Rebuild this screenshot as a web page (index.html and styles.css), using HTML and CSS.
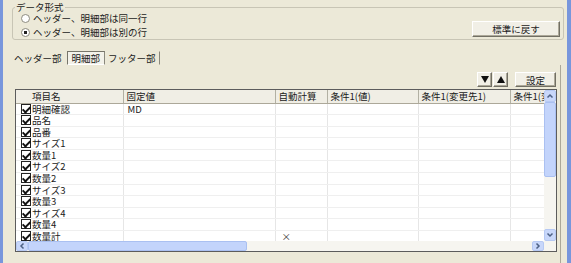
FILE: index.html
```html
<!DOCTYPE html>
<html lang="ja">
<head>
    <meta charset="UTF-8">
    <title>明細部設定</title>
    <link rel="stylesheet" href="styles.css">
</head>
<body>
<div class="window">
    <fieldset class="format">
        <legend>データ形式</legend>
        <div class="format-body">
            <div class="options">
                <label class="option"><span class="radio"></span>ヘッダー、明細部は同一行</label>
                <label class="option"><span class="radio checked"></span>ヘッダー、明細部は別の行</label>
            </div>
            <button class="btn reset">標準に戻す</button>
        </div>
    </fieldset>

    <div class="tabs">
        <span class="tab">ヘッダー部</span>
        <span class="tab active">明細部</span>
        <span class="tab last">フッター部</span>
    </div>

    <div class="panel">
        <div class="toolbar">
            <button class="btn arrow" title="下へ">
                <svg width="8" height="7" viewBox="0 0 8 7"><polygon points="0,0 8,0 4,7" fill="#111"/></svg>
            </button>
            <button class="btn arrow" title="上へ">
                <svg width="8" height="7" viewBox="0 0 8 7"><polygon points="0,7 8,7 4,0" fill="#111"/></svg>
            </button>
            <button class="btn setting">設定</button>
        </div>

        <div class="grid">
            <div class="viewport">
                <table class="list">
                    <colgroup>
                        <col class="c-name"><col class="c-fixed"><col class="c-auto">
                        <col class="c-val"><col class="c-dest"><col class="c-more">
                    </colgroup>
                    <thead>
                        <tr>
                            <th class="name">項目名</th>
                            <th>固定値</th>
                            <th>自動計算</th>
                            <th>条件1(値)</th>
                            <th>条件1(変更先1)</th>
                            <th>条件1(変更先2)</th>
                        </tr>
                    </thead>
                    <tbody>
                        <tr><td class="name"><span class="chk"></span>明細確認</td><td>MD</td><td></td><td></td><td></td><td></td></tr>
                        <tr><td class="name"><span class="chk"></span>品名</td><td></td><td></td><td></td><td></td><td></td></tr>
                        <tr><td class="name"><span class="chk"></span>品番</td><td></td><td></td><td></td><td></td><td></td></tr>
                        <tr><td class="name"><span class="chk"></span>サイズ1</td><td></td><td></td><td></td><td></td><td></td></tr>
                        <tr><td class="name"><span class="chk"></span>数量1</td><td></td><td></td><td></td><td></td><td></td></tr>
                        <tr><td class="name"><span class="chk"></span>サイズ2</td><td></td><td></td><td></td><td></td><td></td></tr>
                        <tr><td class="name"><span class="chk"></span>数量2</td><td></td><td></td><td></td><td></td><td></td></tr>
                        <tr><td class="name"><span class="chk"></span>サイズ3</td><td></td><td></td><td></td><td></td><td></td></tr>
                        <tr><td class="name"><span class="chk"></span>数量3</td><td></td><td></td><td></td><td></td><td></td></tr>
                        <tr><td class="name"><span class="chk"></span>サイズ4</td><td></td><td></td><td></td><td></td><td></td></tr>
                        <tr><td class="name"><span class="chk"></span>数量4</td><td></td><td></td><td></td><td></td><td></td></tr>
                        <tr><td class="name"><span class="chk"></span>数量計</td><td></td><td class="mark">×</td><td></td><td></td><td></td></tr>
                    </tbody>
                </table>
            </div>

            <!-- vertical scrollbar -->
            <div class="vscroll">
                <span class="sb-btn">
                    <svg width="8" height="6" viewBox="0 0 8 6"><path d="M1.5 4.5 L4 2 L6.5 4.5" fill="none" stroke="#4d6185" stroke-width="1.5"/></svg>
                </span>
                <span class="thumb vthumb"></span>
                <span class="track"></span>
                <span class="sb-btn">
                    <svg width="8" height="6" viewBox="0 0 8 6"><path d="M1.5 1.5 L4 4 L6.5 1.5" fill="none" stroke="#4d6185" stroke-width="1.5"/></svg>
                </span>
            </div>

            <!-- horizontal scrollbar -->
            <div class="hscroll">
                <span class="sb-btn">
                    <svg width="6" height="8" viewBox="0 0 6 8"><path d="M4.5 1.5 L2 4 L4.5 6.5" fill="none" stroke="#4d6185" stroke-width="1.5"/></svg>
                </span>
                <span class="thumb hthumb"></span>
                <span class="track"></span>
                <span class="sb-btn">
                    <svg width="6" height="8" viewBox="0 0 6 8"><path d="M1.5 1.5 L4 4 L1.5 6.5" fill="none" stroke="#4d6185" stroke-width="1.5"/></svg>
                </span>
            </div>
            <div class="corner"></div>
        </div>
    </div>
</div>
</body>
</html>
```

FILE: styles.css
```css
* {
    box-sizing: border-box;
}

body {
    margin: 0;
    background-color: #ece9d8;
    font-family: "Noto Sans CJK JP", "Noto Sans", sans-serif;
    font-size: 9.5px;
    color: #1a1a1a;
}

.window {
    height: 263px;
    border-left: 3px solid #7896dc;
    border-right: 4px solid #7896dc;
    overflow: hidden;
}

/* group box */
.format {
    margin: 1px 3px 0 9px;
    padding: 0 3px 0 2px;
    border: 1px solid #c8c5b5;
    border-radius: 3px;
}

.format legend {
    padding: 0 1px;
    line-height: 12px;
}

.format-body {
    display: flex;
    align-items: flex-end;
    margin-top: -2px;
}

.options {
    flex: 1;
    padding-left: 6px;
}

.option {
    display: flex;
    align-items: center;
    gap: 3px;
    height: 14px;
}

.radio {
    width: 9px;
    height: 9px;
    border: 1px solid #8e8c80;
    border-radius: 50%;
    background: #fff;
}

.radio.checked {
    background: radial-gradient(circle, #222 0 1.5px, #fff 2px);
}

.btn {
    font: inherit;
    color: inherit;
    padding: 0;
    background-color: #f1efe6;
    border: 1px solid;
    border-color: #fff #716f64 #716f64 #fff;
    box-shadow: inset -1px -1px 0 #aca899;
    display: flex;
    align-items: center;
    justify-content: center;
}

.reset {
    width: 88px;
    height: 16px;
    margin-bottom: 2px;
}

/* tabs */
.tabs {
    display: flex;
    gap: 3px;
    margin: 11px 0 0 9px;
    height: 14px;
}

.tab {
    padding: 0 1px;
    line-height: 12px;
    border: 1px solid transparent;
}

.tab.active {
    padding: 0 4px;
    background-color: #f3f2ea;
    border-color: #77756a #8a887c #fff #77756a;
}

.tab.last {
    margin-left: -2px;
    padding-right: 3px;
    border-right-color: #8a887c;
}

/* tab page */
.panel {
    margin: 0 6px 0 9px;
    padding: 7px 3px 0 3px;
    border-right: 1px solid #aca899;
    height: 212px;
}

.toolbar {
    display: flex;
    justify-content: flex-end;
    gap: 1px;
    padding-right: 1px;
    height: 15px;
}

.arrow {
    width: 15px;
    height: 15px;
}

.setting {
    width: 41px;
    height: 15px;
    margin-left: 6px;
}

/* list */
.grid {
    margin-top: 2px;
    height: 163px;
    border: 1px solid #5c5c5c;
    display: grid;
    grid-template-columns: 1fr 12px;
    grid-template-rows: 1fr 10px;
    background-color: #fff;
}

.viewport {
    overflow: hidden;
}

.list {
    table-layout: fixed;
    border-collapse: collapse;
    width: 554px;
}

.c-name { width: 107px; }
.c-fixed { width: 152px; }
.c-auto { width: 52px; }
.c-val { width: 91px; }
.c-dest { width: 92px; }
.c-more { width: 60px; }

.list th {
    height: 13px;
    padding: 0 0 0 3px;
    background-color: #f0eee5;
    border-right: 1px solid #b2b0a3;
    border-bottom: 1px solid #aca899;
    font-weight: normal;
    text-align: left;
    line-height: 12px;
    white-space: nowrap;
    overflow: hidden;
}

.list th.name {
    padding-left: 16px;
}

.list tbody tr {
    height: 11.6px;
}

.list td {
    padding: 0 0 0 4px;
    border-right: 1px solid #e6e6e6;
    border-bottom: 1px solid #efefef;
    line-height: 10.6px;
    white-space: nowrap;
    overflow: hidden;
}

.list td.name {
    padding-left: 5px;
}

.list td.mark {
    padding-left: 6px;
    color: #444;
}

.chk {
    display: inline-block;
    position: relative;
    width: 10px;
    height: 10px;
    margin-right: 1px;
    vertical-align: -1px;
    border: 1px solid #222;
    background: #fff;
}

.chk::after {
    content: "";
    position: absolute;
    left: 2px;
    top: 0;
    width: 3px;
    height: 6px;
    border: solid #111;
    border-width: 0 2px 2px 0;
    transform: rotate(45deg);
}

/* scrollbars */
.vscroll {
    display: flex;
    flex-direction: column;
    background-color: #f6f5f0;
}

.hscroll {
    display: flex;
    background-color: #f6f5f0;
}

.sb-btn {
    width: 12px;
    height: 12px;
    display: flex;
    align-items: center;
    justify-content: center;
    background-color: #c8d7fa;
    border: 1px solid #b6c9f3;
    border-radius: 2px;
}

.hscroll .sb-btn {
    height: 10px;
}

.thumb {
    background-color: #c3d4fb;
    border: 1px solid #aac0f1;
    border-radius: 2px;
}

.vthumb {
    height: 75px;
}

.hthumb {
    width: 219px;
}

.track {
    flex: 1;
}

.corner {
    background-color: #f6f5f0;
}
```
